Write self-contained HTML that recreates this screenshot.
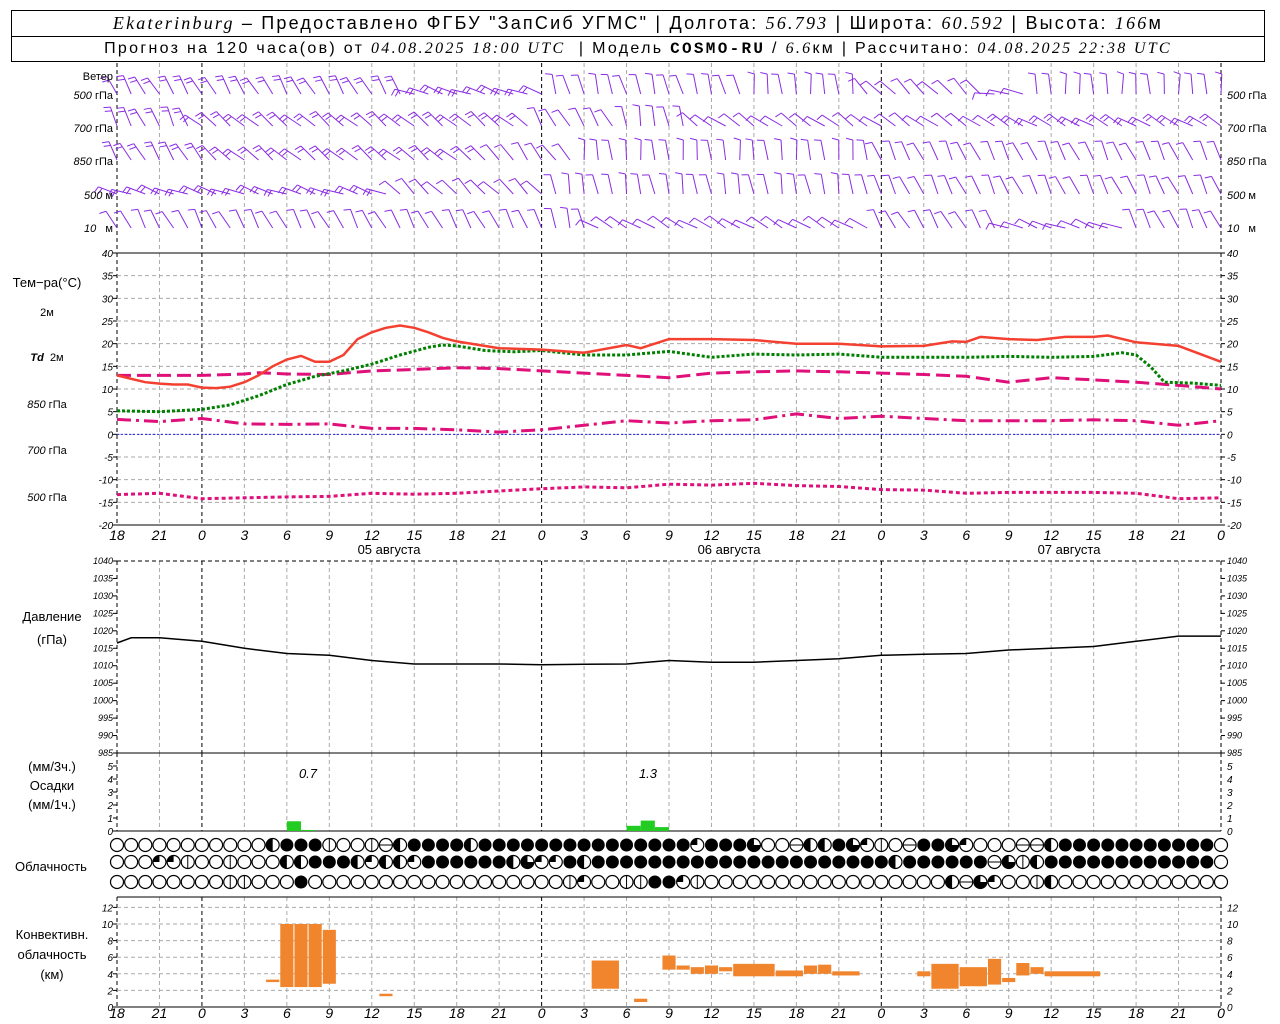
<!DOCTYPE html>
<html><head><meta charset="utf-8">
<style>
html,body{margin:0;padding:0;background:#fff;}
body{width:1280px;height:1024px;overflow:hidden;position:relative;font-family:"Liberation Sans",sans-serif;}
svg{position:absolute;left:0;top:0;}
.hdr{position:absolute;left:11px;width:1252px;border:1px solid #000;text-align:center;font-size:18px;letter-spacing:2.2px;white-space:nowrap;}
.i{font-style:italic;font-family:"Liberation Serif",serif;}
.b{font-weight:bold;font-family:"Liberation Mono",monospace;}
</style></head><body>
<div class="hdr" style="top:10px;height:25px;line-height:25px;"><span class="i">Ekaterinburg</span> – Предоставлено ФГБУ "ЗапСиб УГМС" | Долгота: <span class="i">56.793</span> | Широта: <span class="i">60.592</span> | Высота: <span class="i">166</span>м</div>
<div class="hdr" style="top:36px;height:24px;line-height:24px;font-size:16px;letter-spacing:2.3px;">Прогноз на 120 часа(ов) от <span class="i">04.08.2025 18:00 UTC</span> &nbsp;| Модель <span class="b">COSMO-RU</span> / <span class="i">6.6</span>км | Рассчитано: <span class="i">04.08.2025 22:38 UTC</span></div>
<svg id="s" width="1280" height="1024" xmlns="http://www.w3.org/2000/svg" font-family="Liberation Sans, sans-serif">
<g id="g"></g>
<g font-size="11" text-anchor="end">
<text x="113" y="80">Ветер</text>
<text x="113" y="99"><tspan font-style="italic">500</tspan> гПа</text>
<text x="113" y="132"><tspan font-style="italic">700</tspan> гПа</text>
<text x="113" y="165"><tspan font-style="italic">850</tspan> гПа</text>
<text x="113" y="199"><tspan font-style="italic">500</tspan> м</text>
<text x="113" y="232"><tspan font-style="italic">10</tspan> &#160; м</text>
</g>
<g font-size="11" text-anchor="start">
<text x="1227" y="99"><tspan font-style="italic">500</tspan> гПа</text>
<text x="1227" y="132"><tspan font-style="italic">700</tspan> гПа</text>
<text x="1227" y="165"><tspan font-style="italic">850</tspan> гПа</text>
<text x="1227" y="199"><tspan font-style="italic">500</tspan> м</text>
<text x="1227" y="232"><tspan font-style="italic">10</tspan> &#160; м</text>
</g>
<g font-size="12" text-anchor="middle">
<text x="47" y="287" font-size="13">Тем−ра(°С)</text>
<text x="47" y="316" font-size="11">2м</text>
<text x="47" y="361" font-size="11"><tspan font-style="italic" font-weight="bold">Td</tspan> &#160;2м</text>
<text x="47" y="408" font-size="11"><tspan font-style="italic">850</tspan> гПа</text>
<text x="47" y="454" font-size="11"><tspan font-style="italic">700</tspan> гПа</text>
<text x="47" y="501" font-size="11"><tspan font-style="italic">500</tspan> гПа</text>
<text x="389" y="554" font-size="13">05 августа</text>
<text x="729" y="554" font-size="13">06 августа</text>
<text x="1069" y="554" font-size="13">07 августа</text>
<text x="52" y="621" font-size="13">Давление</text>
<text x="52" y="644" font-size="13">(гПа)</text>
<text x="52" y="771" font-size="13">(мм/3ч.)</text>
<text x="52" y="790" font-size="13">Осадки</text>
<text x="52" y="809" font-size="13">(мм/1ч.)</text>
<text x="308" y="778" font-size="13" font-style="italic">0.7</text>
<text x="648" y="778" font-size="13" font-style="italic">1.3</text>
<text x="51" y="871" font-size="13">Облачность</text>
<text x="52" y="939" font-size="13">Конвективн.</text>
<text x="52" y="959" font-size="13">облачность</text>
<text x="52" y="979" font-size="13">(км)</text>
</g>
<g id="lab" font-size="11" font-style="italic"></g>
</svg>
<script>
var NS="http://www.w3.org/2000/svg",G=document.getElementById('g'),L=document.getElementById('lab');
function X(h){return 117+h*14.154;}
function el(t,a,p){var e=document.createElementNS(NS,t);for(var k in a)e.setAttribute(k,a[k]);(p||G).appendChild(e);return e;}
function ln(x1,y1,x2,y2,s,w,d){var a={x1:x1,y1:y1,x2:x2,y2:y2,stroke:s||'#000','stroke-width':w||1};if(d)a['stroke-dasharray']=d;return el('line',a);}
function tx(x,y,t,anc,sz){var e=el('text',{x:x,y:y,'text-anchor':anc||'end','font-size':sz||10},L);e.textContent=t;}
var panels=[[63,252],[253,525],[561,753],[753,831],[897,1007]];
panels.forEach(function(p){for(var h=0;h<=78;h+=3){var dark=(h%24==6);var c=(h==0||h==78)?'#000':(dark?'#000':'#aaa');ln(X(h),p[0],X(h),p[1],c,1,'4,3');}});
function TY(t){return 253+(40-t)*272/60;}
for(var t=40;t>=-20;t-=5){if(t<40&&t>-20)ln(117,TY(t),1221,TY(t),'#aaa',1,'4,3');tx(113,TY(t)+4,t);tx(1227,TY(t)+4,t,'start');ln(113,TY(t),117,TY(t));ln(1221,TY(t),1225,TY(t));}
ln(117,TY(0),1221,TY(0),'#22f',1,'2,2');
ln(117,253,1221,253);ln(117,525,1221,525);
var lbl=[18,21,0,3,6,9,12,15,18,21,0,3,6,9,12,15,18,21,0,3,6,9,12,15,18,21,0];
for(var i=0;i<27;i++){tx(X(i*3),540,lbl[i],'middle',14);tx(X(i*3),1018,lbl[i],'middle',14);}
function PY(p){return 561+(1040-p)*192/55;}
for(var p=1040;p>=985;p-=5){tx(113,PY(p)+3,p,'end',9);tx(1227,PY(p)+3,p,'start',9);ln(113,PY(p),117,PY(p));ln(1221,PY(p),1225,PY(p));}
ln(117,561,1221,561,'#000',1,'4,3');ln(117,753,1221,753);
function RY(v){return 831-v*13;}
for(var v=0;v<=5;v++){tx(113,RY(v)+4,v);tx(1227,RY(v)+4,v,'start');ln(113,RY(v),117,RY(v));}
ln(117,831,1221,831);
function CY(v){return 1007-v*8.3;}
for(var v=0;v<=12;v+=2){if(v>0)ln(117,CY(v),1221,CY(v),'#aaa',1,'4,3');tx(113,CY(v)+4,v);tx(1227,CY(v)+4,v,'start');ln(113,CY(v),117,CY(v));}
ln(117,897,1221,897);ln(117,1007,1221,1007);
function curve(pts,fy,st){var d='';for(var i=0;i<pts.length;i+=2){d+=(i?'L':'M')+X(pts[i]).toFixed(1)+','+fy(pts[i+1]).toFixed(1);}var a={d:d,fill:'none',stroke:st[0],'stroke-width':st[1]};if(st[2])a['stroke-dasharray']=st[2];el('path',a);}
curve([0,-13.3,3,-13,6,-14.2,9,-14,12,-13.8,15,-13.7,18,-13,21,-13.2,24,-13,27,-12.5,30,-12,33,-11.6,36,-11.8,39,-11,42,-11.2,45,-10.8,48,-11.3,51,-11.5,54,-12.2,57,-12.3,60,-13,63,-12.8,66,-12.8,69,-12.8,72,-13,75,-14.2,78,-14],TY,['#e0107a',3,'4,3']);
curve([0,3.3,3,2.8,6,3.5,9,2.3,12,2.2,15,2.3,18,1.3,21,1.3,24,1,27,0.5,30,1,33,2,36,3,39,2.5,42,3,45,3.2,48,4.5,51,3.5,54,4,57,3.5,60,3,63,3,66,3,69,3.2,72,3,75,2,78,3],TY,['#e0107a',3,'14,5,3,5']);
curve([0,13,3,13,6,13,9,13.3,10,13.6,12,13.3,15,13.2,18,14,21,14.3,24,14.7,27,14.5,30,14,33,13.5,36,13,39,12.5,42,13.5,45,13.8,48,14,51,13.8,54,13.5,57,13.2,60,12.8,63,11.5,66,12.5,69,12,72,11.5,75,10.8,78,10],TY,['#e0107a',3,'14,6']);
curve([0,5.2,3,5,6,5.5,8,6.5,10,8.5,12,11,14,12.8,16,14,18,15.5,20,17.5,22,19.2,23,19.7,24,19.5,26,18.5,28,18.2,30,18.5,33,17.5,36,17.5,39,18.3,42,17,45,17.7,48,17.5,51,17.7,54,17,57,17,60,17,63,17.2,66,17,69,17.2,71,18,72,17.5,73,15,74,11.5,76,11.3,78,10.8],TY,['#008000',3,'3,2']);
curve([0,13,2,11.5,3,11.2,4,11,5,11,6,10.3,7,10.2,8,10.5,9,11.5,10,13,11,15,12,16.5,13,17.3,14,16,15,16,16,17.5,17,21,18,22.5,19,23.5,20,24,21,23.5,22,22.5,23,21.3,24,20.5,27,19,30,18.7,33,18,36,19.7,37,19,39,21,42,21,45,20.8,48,20,51,20,54,19.4,57,19.5,59,20.5,60,20.4,61,21.5,63,21,65,20.8,67,21.5,69,21.5,70,21.8,72,20.3,75,19.5,78,16],TY,['#f44030',2.5]);
curve([0,1016.5,1,1018,3,1018,6,1017,9,1015,12,1013.5,15,1013,18,1011.5,21,1010.5,24,1010.5,27,1010.5,30,1010.3,33,1010.4,36,1010.5,39,1011.5,42,1011,45,1011,48,1011.5,51,1012,54,1013,57,1013.3,60,1013.5,63,1014.5,66,1015,69,1015.5,72,1017,75,1018.5,78,1018.5],PY,['#000',1.5]);
[[12,1,0.75],[13,1,0.08],[36,1,0.4],[37,1,0.8],[38,1,0.3]].forEach(function(b){el('rect',{x:X(b[0]),y:RY(b[2]),width:14.15*b[1],height:831-RY(b[2]),fill:'#22cc22'});});
[[10.5,1,3,3.3],[11.5,1,2.4,10],[12.5,1,2.4,10],[13.5,1,2.4,10],[14.5,1,2.8,9.3],[18.5,1,1.3,1.6],[33.5,2,2.2,5.6],[36.5,1,0.6,1],[38.5,1,4.5,6.2],[39.5,1,4.5,5],[40.5,1,4,4.8],[41.5,1,4,5],[42.5,1,4.3,4.8],[43.5,3,3.7,5.2],[46.5,2,3.7,4.4],[48.5,1,4,5],[49.5,1,4,5.1],[50.5,2,3.8,4.3],[56.5,1,3.7,4.3],[57.5,2,2.2,5.2],[59.5,2,2.5,4.8],[61.5,1,2.7,5.8],[62.5,1,3,3.5],[63.5,1,3.8,5.3],[64.5,1,4,4.8],[65.5,4,3.7,4.3]].forEach(function(b){el('rect',{x:X(b[0])+0.5,y:CY(b[3]),width:14.15*b[1]-1,height:CY(b[2])-CY(b[3]),fill:'#f0852d'});});
var rows=[
'0000000000024445005624444244444444444444414443006224315064431000662'+'44444444444',
'000115005000224442122144444423114244444444444444444444424444446352444444444444',
'000000005500040000000000000000005100554415000000000000000002631005200000000000'];
var cy=[845,862,882];
rows.forEach(function(r,ri){for(var i=0;i<79;i++){var c=r.charAt(i)||'0',x=X(i),y=cy[ri],R=6.5;
 if(c=='4'){el('circle',{cx:x,cy:y,r:R,fill:'#000'});continue;}
 el('circle',{cx:x,cy:y,r:R,fill:'#fff',stroke:'#000','stroke-width':1.2});
 if(c=='5')ln(x,y-R,x,y+R);
 if(c=='6')ln(x-R,y,x+R,y);
 if(c=='2')el('path',{d:'M'+x+','+(y-R)+'A'+R+','+R+' 0 0 0 '+x+','+(y+R)+'Z',fill:'#000'});
 if(c=='1')el('path',{d:'M'+x+','+y+'L'+x+','+(y-R)+'A'+R+','+R+' 0 0 0 '+(x-R)+','+y+'Z',fill:'#000'});
 if(c=='3')el('path',{d:'M'+x+','+y+'L'+x+','+(y-R)+'A'+R+','+R+' 0 1 0 '+(x+R)+','+y+'Z',fill:'#000'});
}});
var wy=[80,112,146,180,214];
var spec=[
 [[0,-120,2],[21,-160,2],[31,-105,1],[45,-95,1],[53,-135,1],[62,-170,1],[65,-92,1]],
 [[0,-115,2],[6,-140,2],[30,-120,1],[36,-100,1],[41,-145,1],[63,-150,2]],
 [[0,-120,2],[7,-140,2],[27,-125,1],[33,-95,1],[54,-115,1]],
 [[0,-160,2],[20,-135,1],[31,-100,1],[54,-115,1]],
 [[0,-118,1],[30,-105,1],[34,-150,1],[54,-120,1],[63,-160,1],[72,-115,1]]];
spec.forEach(function(s,ri){for(var h=0;h<=78;h++){var a=s[0][1],n=s[0][2];s.forEach(function(q){if(h>=q[0]){a=q[1];n=q[2];}});
 a+=Math.sin(h*1.7+ri)*7;var r=a*Math.PI/180,x=X(h),y=wy[ri]+14,len=20;
 var ex=x+Math.cos(r)*len,ey=y+Math.sin(r)*len;
 ln(x,y,ex,ey,'#8a2be2',1);
 for(var k=0;k<n;k++){var px=x+Math.cos(r)*(len-k*4),py=y+Math.sin(r)*(len-k*4),fr=r-Math.PI/2.4;
  ln(px,py,px+Math.cos(fr)*7,py+Math.sin(fr)*7,'#8a2be2',1);}
}});
</script>
</body></html>
